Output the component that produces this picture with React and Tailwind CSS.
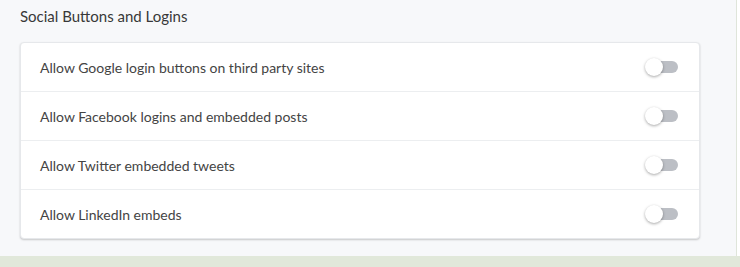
import React, { useState } from "react";

const options = [
  { id: "google", label: "Allow Google login buttons on third party sites" },
  { id: "facebook", label: "Allow Facebook logins and embedded posts" },
  { id: "twitter", label: "Allow Twitter embedded tweets" },
  { id: "linkedin", label: "Allow LinkedIn embeds" },
];

const Toggle = ({ on, onClick }) => (
  <button
    onClick={onClick}
    className={`relative w-[32px] h-[12px] rounded-full ${on ? "bg-[#8fb3e6]" : "bg-[#bcbfc5]"}`}
  >
    <span
      className={`absolute top-1/2 -translate-y-1/2 w-[18px] h-[18px] rounded-full bg-white shadow-[0_1px_3px_rgba(0,0,0,0.35)] ${on ? "left-[15px]" : "left-[-1px]"}`}
    />
  </button>
);

const App = () => {
  const [state, setState] = useState({});

  return (
    <div className="w-[740px] h-[267px] flex flex-col bg-white font-['Lato',sans-serif]">
      <div className="flex-1 w-[737px] bg-[#f7f8fa] border-r border-[#dfe5da] px-[20px]">
        {/* Section title */}
        <h2 className="h-[33px] flex items-center text-[15px] text-[#383838]">
          Social Buttons and Logins
        </h2>

        {/* Card */}
        <div className="mt-[9px] w-[680px] bg-white rounded-[4px] border border-[#e6e8eb] shadow-[0_1px_2px_rgba(0,0,0,0.2)]">
          {options.map((opt, i) => (
            <div
              key={opt.id}
              className={`flex items-center justify-between pl-[19px] pr-[21px] ${i > 0 ? "h-[49px] border-t border-[#eceef0]" : "h-[48px]"}`}
            >
              <span className="text-[14px] text-[#444]">{opt.label}</span>
              <Toggle
                on={!!state[opt.id]}
                onClick={() => setState((s) => ({ ...s, [opt.id]: !s[opt.id] }))}
              />
            </div>
          ))}
        </div>
      </div>

      {/* Footer strip */}
      <div className="h-[11px] bg-[#e1e8da]" />
    </div>
  );
};

export default App;
